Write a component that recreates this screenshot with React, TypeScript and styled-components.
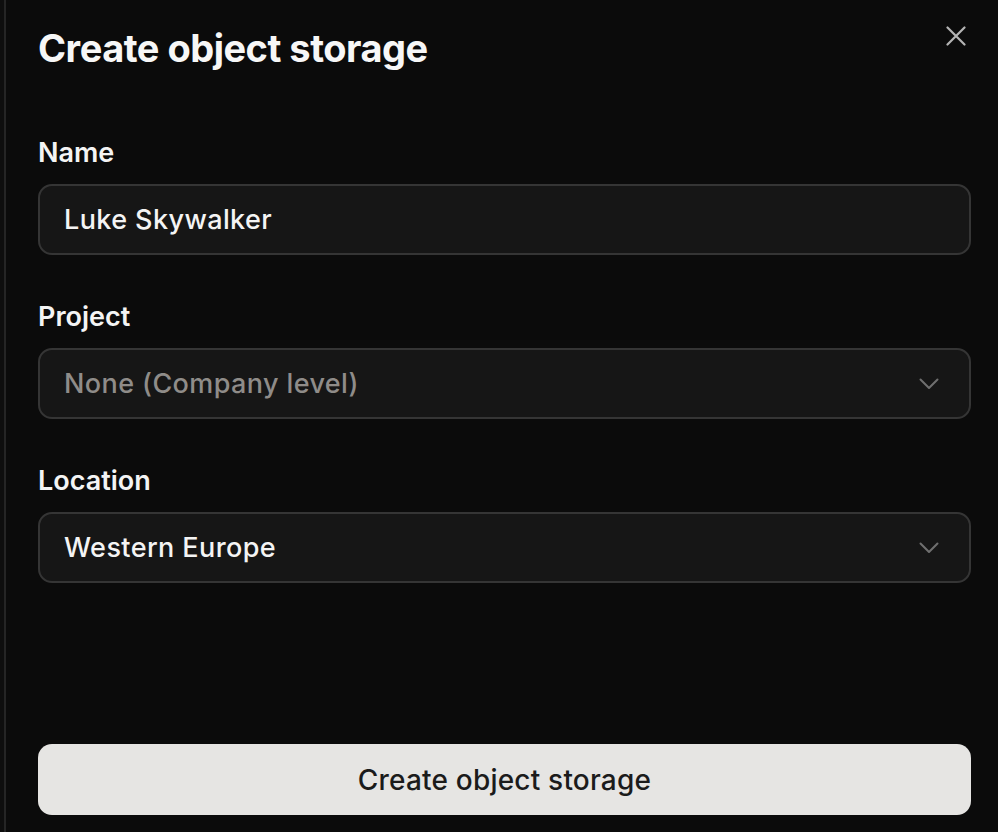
import styled, { createGlobalStyle } from "styled-components";

const GlobalStyle = createGlobalStyle`
  html, body {
    margin: 0;
    padding: 0;
    background: #0e0e0e;
  }
  * {
    box-sizing: border-box;
  }
`;

const Shell = styled.div`
  display: flex;
  width: 998px;
  height: 832px;
  padding-left: 4px;
  background: #0e0e0e;
  overflow: hidden;
`;

const Panel = styled.section`
  flex: 1;
  display: flex;
  flex-direction: column;
  padding: 0 27px 17px 32px;
  background: #0b0b0b;
  border-left: 2px solid #252525;
  font-family: Inter, "Noto Sans", sans-serif;
  color: #f4f4f4;
`;

const Header = styled.header`
  display: flex;
  justify-content: space-between;
  align-items: flex-start;
  height: 139px;
  padding-top: 24px;
  flex-shrink: 0;
`;

const Title = styled.h1`
  margin: 0;
  font-size: 38px;
  line-height: 48px;
  font-weight: 700;
  letter-spacing: -0.5px;
  color: #f7f7f7;
`;

const CloseButton = styled.button`
  display: flex;
  align-items: center;
  justify-content: center;
  width: 30px;
  height: 30px;
  margin-top: -3px;
  padding: 0;
  background: none;
  border: none;
  color: #b4b4b4;
  cursor: pointer;
`;

const Form = styled.div`
  display: flex;
  flex-direction: column;
  gap: 48px;
`;

const Field = styled.label`
  display: flex;
  flex-direction: column;
  gap: 17px;
`;

const Label = styled.span`
  font-size: 27px;
  line-height: 28px;
  font-weight: 600;
  color: #f4f4f4;
`;

const Control = styled.div<{ $muted?: boolean }>`
  display: flex;
  align-items: center;
  justify-content: space-between;
  height: 71px;
  padding: 0 30px 0 24px;
  background: #161616;
  border: 2px solid #353535;
  border-radius: 14px;
  font-size: 27px;
  font-weight: 500;
  letter-spacing: 0.4px;
  color: ${(p) => (p.$muted ? "#8f8c89" : "#f4f4f4")};
`;

const Spacer = styled.div`
  flex: 1;
`;

const SubmitButton = styled.button`
  height: 71px;
  width: 100%;
  flex-shrink: 0;
  border: none;
  border-radius: 14px;
  background: #e6e5e3;
  color: #1b1b1b;
  font-family: Inter, "Noto Sans", sans-serif;
  font-size: 28px;
  font-weight: 500;
  letter-spacing: 0.2px;
  cursor: pointer;
`;

const Chevron = () => (
  <svg width="20" height="12" viewBox="0 0 20 12" fill="none">
    <path
      d="M1.5 1.5 L10 10 L18.5 1.5"
      stroke="#6f6f6f"
      strokeWidth="2"
      strokeLinecap="round"
      strokeLinejoin="round"
    />
  </svg>
);

const CloseIcon = () => (
  <svg width="20" height="20" viewBox="0 0 20 20" fill="none">
    <path
      d="M1.5 1.5 L18.5 18.5 M18.5 1.5 L1.5 18.5"
      stroke="currentColor"
      strokeWidth="2.2"
      strokeLinecap="round"
    />
  </svg>
);

const fields = [
  { label: "Name", value: "Luke Skywalker", select: false, muted: false },
  { label: "Project", value: "None (Company level)", select: true, muted: true },
  { label: "Location", value: "Western Europe", select: true, muted: false },
];

function App() {
  return (
    <>
      <GlobalStyle />
      <Shell>
        <Panel>
          <Header>
            <Title>Create object storage</Title>
            <CloseButton aria-label="Close">
              <CloseIcon />
            </CloseButton>
          </Header>
          <Form>
            {fields.map((f) => (
              <Field key={f.label}>
                <Label>{f.label}</Label>
                <Control $muted={f.muted}>
                  <span>{f.value}</span>
                  {f.select ? <Chevron /> : null}
                </Control>
              </Field>
            ))}
          </Form>
          <Spacer />
          <SubmitButton>Create object storage</SubmitButton>
        </Panel>
      </Shell>
    </>
  );
}

export default App;
